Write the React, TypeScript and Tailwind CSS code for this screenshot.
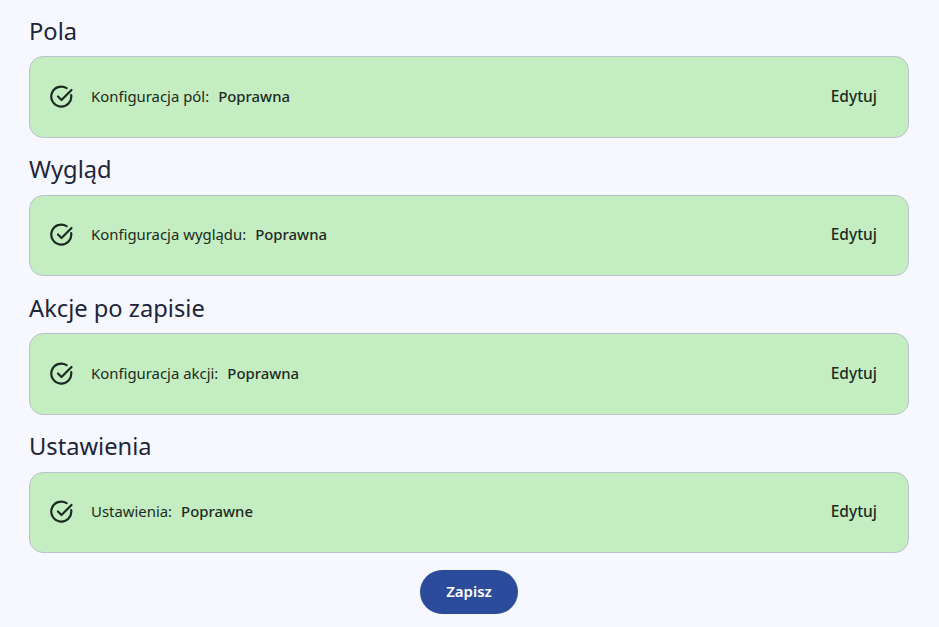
import React from "react";

function CheckIcon() {
  return (
    <svg width="24" height="24" viewBox="0 0 24 24" fill="none" stroke="#1c2b22" strokeWidth="2.2" strokeLinecap="round" strokeLinejoin="round" className="shrink-0">
      <path d="M21.2 10.2A10 10 0 1 1 16.6 3.1" />
      <path d="M8 11.5l3.5 3.5L21.5 5" />
    </svg>
  );
}

const sections = [
  { title: "Pola", label: "Konfiguracja pól:", value: "Poprawna" },
  { title: "Wygląd", label: "Konfiguracja wyglądu:", value: "Poprawna" },
  { title: "Akcje po zapisie", label: "Konfiguracja akcji:", value: "Poprawna" },
  { title: "Ustawienia", label: "Ustawienia:", value: "Poprawne" },
];

export default function App() {
  return (
    <div className="min-h-[627px] bg-[#f7f8ff] pl-[29px] pr-[30px] pt-[12.5px] font-['Noto_Sans',sans-serif] text-[#1c2b22] overflow-hidden">
      <div className="flex flex-col gap-[13.5px]">
        {sections.map((s) => (
          <section key={s.title}>
            <h2 className="h-[36px] mb-[7.5px] text-[23.7px] leading-[36px] text-[#20253a]">{s.title}</h2>
            <div className="flex h-[81.5px] items-center rounded-[14px] border border-[#b9c2cf] bg-[#c4edc1] pl-[20px] pr-[31px]">
              <CheckIcon />
              <div className="flex items-center pb-[2px]">
                <span className="ml-[17px] text-[14.9px]">{s.label}</span>
                <span className="ml-[9px] text-[14.9px] font-medium">{s.value}</span>
              </div>
              <span className="ml-auto pb-[1px] text-[15.5px] font-medium">Edytuj</span>
            </div>
          </section>
        ))}
      </div>
      <div className="mt-[17px] flex justify-center">
        <button className="h-[44px] w-[98px] rounded-full bg-[#2c4b9b] pb-[1px] text-[15px] font-semibold text-white">Zapisz</button>
      </div>
    </div>
  );
}
